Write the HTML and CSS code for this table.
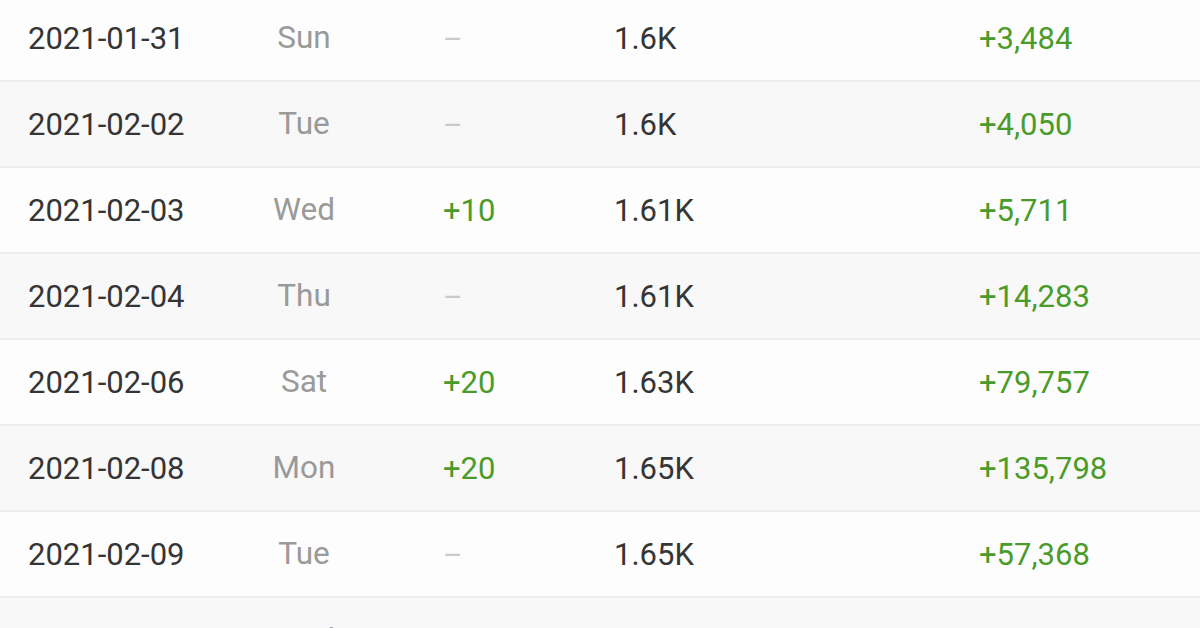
FILE: index.html
```html
<!DOCTYPE html>
<html>
<head>
<meta charset="utf-8">
<link rel="stylesheet" href="styles.css">
</head>
<body>
<div class="table">
  <div class="row">
    <div class="date">2021-01-31</div><div class="day">Sun</div><div class="delta"><span class="dash">–</span></div><div class="total">1.6K</div><div class="views">+3,484</div>
  </div>
  <div class="row alt">
    <div class="date">2021-02-02</div><div class="day">Tue</div><div class="delta"><span class="dash">–</span></div><div class="total">1.6K</div><div class="views">+4,050</div>
  </div>
  <div class="row">
    <div class="date">2021-02-03</div><div class="day">Wed</div><div class="delta">+10</div><div class="total">1.61K</div><div class="views">+5,711</div>
  </div>
  <div class="row alt">
    <div class="date">2021-02-04</div><div class="day">Thu</div><div class="delta"><span class="dash">–</span></div><div class="total">1.61K</div><div class="views">+14,283</div>
  </div>
  <div class="row">
    <div class="date">2021-02-06</div><div class="day">Sat</div><div class="delta">+20</div><div class="total">1.63K</div><div class="views">+79,757</div>
  </div>
  <div class="row alt">
    <div class="date">2021-02-08</div><div class="day">Mon</div><div class="delta">+20</div><div class="total">1.65K</div><div class="views">+135,798</div>
  </div>
  <div class="row">
    <div class="date">2021-02-09</div><div class="day">Tue</div><div class="delta"><span class="dash">–</span></div><div class="total">1.65K</div><div class="views">+57,368</div>
  </div>
  <div class="row alt">
    <div class="date">2021-02-10</div><div class="day">Wed</div><div class="delta">+10</div><div class="total">1.66K</div><div class="views">+42,913</div>
  </div>
</div>
</body>
</html>
```
FILE: styles.css
```css
html, body {
  margin: 0;
  padding: 0;
  background: #fdfdfd;
  overflow: hidden;
}
body {
  width: 1200px;
  height: 628px;
  font-family: Roboto, "Liberation Sans", sans-serif;
}
.table {
  margin-top: -4px;
}
.row {
  display: grid;
  grid-template-columns: 216px 120px 250px 365px 1fr;
  align-items: center;
  height: 84px;
  padding-left: 28px;
  border-bottom: 2px solid #ececec;
  background: #fdfdfd;
  font-size: 31px;
  line-height: 1;
}
.row.alt {
  background: #f8f8f8;
}
.date {
  color: #353535;
}
.day {
  color: #9a9a9a;
  text-align: center;
  font-size: 31.5px;
}
.delta {
  padding-left: 79px;
  color: #4b9b2a;
}
.dash {
  color: #cacaca;
  font-size: 30px;
}
.total {
  color: #353535;
}
.views {
  color: #4b9b2a;
}
```
